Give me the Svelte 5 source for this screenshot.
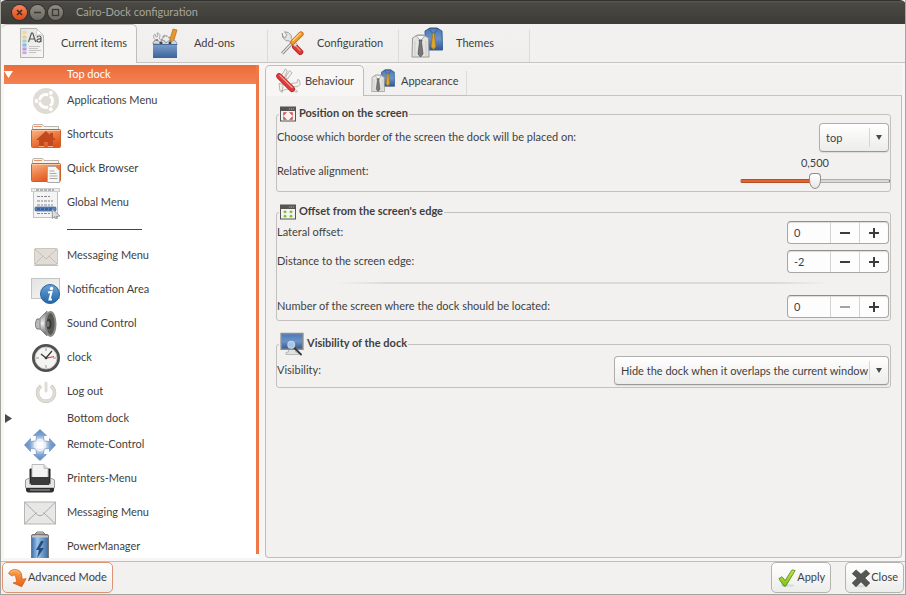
<script>
  const mainTabs = [
    { label: 'Current items', icon: 'palette', size: 32 },
    { label: 'Add-ons', icon: 'toolbox', size: 32 },
    { label: 'Configuration', icon: 'tools', size: 24 },
    { label: 'Themes', icon: 'shirts', size: 32 },
  ];
  const pageTabs = [
    { label: 'Behaviour', icon: 'knife', size: 26 },
    { label: 'Appearance', icon: 'shirts', size: 24 },
  ];
  const items = [
    { label: 'Top dock', kind: 'dock', open: true },
    { label: 'Applications Menu', icon: 'ubuntu', child: true },
    { label: 'Shortcuts', icon: 'home', child: true },
    { label: 'Quick Browser', icon: 'folder', child: true },
    { label: 'Global Menu', icon: 'menu', child: true },
    { label: '', kind: 'rule' },
    { label: 'Messaging Menu', icon: 'mailSmall', child: true },
    { label: 'Notification Area', icon: 'info', child: true },
    { label: 'Sound Control', icon: 'sound', child: true },
    { label: 'clock', icon: 'clock', child: true },
    { label: 'Log out', icon: 'power', child: true },
    { label: 'Bottom dock', kind: 'dock', open: false },
    { label: 'Remote-Control', icon: 'arrows' },
    { label: 'Printers-Menu', icon: 'printer' },
    { label: 'Messaging Menu', icon: 'mail' },
    { label: 'PowerManager', icon: 'battery' },
  ];

  let mainTab = $state(0);
  let pageTab = $state(0);
  let selected = $state(0);
  let border = $state('top');
  let visibility = $state('Hide the dock when it overlaps the current window');
  let align = $state(0.5);
  let lateral = $state(0);
  let distance = $state(-2);
  let screen = $state(0);
  const alignText = $derived(Number(align).toFixed(3).replace('.', ','));
</script>

{#snippet icon(name, size)}
  <svg class="icon" width={size} height={size} viewBox="0 0 32 32" aria-hidden="true">
    {#if name === 'palette'}
      <path d="M4.500 1.500h16l7 7v22h-23z" fill="url(#paper)" stroke="#b5b5b2" />
      <path d="M20.500 1.500c1 3 0 5-1 7 3-1 5-1 8 0z" fill="#fff" stroke="#bbb" stroke-width=".7" />
      <rect x="6.500" y="4" width="4" height="4" fill="#f0d9a0" /><rect x="6.500" y="8" width="4" height="4" fill="#dccf95" />
      <rect x="6.500" y="12" width="4" height="4" fill="#9ad3cf" /><rect x="6.500" y="16" width="4" height="4" fill="#8fb4e6" />
      <rect x="6.500" y="20" width="4" height="4" fill="#b99be0" /><rect x="6.500" y="24" width="4" height="3" fill="#cba6e0" />
      <path d="M6 8h5M6 12h5M6 16h5M6 20h5M6 24h5" stroke="#fff" stroke-width=".7" />
      <path d="M12.500 15l3-9h1.200l3 9M13.500 12h5M25 15v-4.500c0-2-3.500-2-4 0M25 12c-5-.5-5 3-2.500 3 1.500 0 2.500-1 2.500-2" fill="none" stroke="#565656" stroke-width="1.200" />
      <path d="M13 19.500h11M13 21.500h9M13 23.500h12M13 25.500h7" stroke="#c4c4c2" />
    {:else if name === 'toolbox'}
      <path d="M7 13c-3-1-3-5-1-6l1 3 2-1-1-3c3 0 4 3 2 5l5 6M12 14l3-6 2 1-2 6" fill="#eee" stroke="#aaa" />
      <circle cx="17" cy="13" r="4" fill="#eee" stroke="#999" stroke-width="1.500" stroke-dasharray="2 1" />
      <path d="M21 12l3-10 4 1-3 10-3 3z" fill="#e8962e" stroke="#b36b14" stroke-width=".7" />
      <path d="M4 17c0-5 6-5 7-1 2-4 5-3 6 0 2-3 4-2 5-1 3-3 6-1 6 3z" fill="#d6d6d6" stroke="#8f8f8f" />
      <circle cx="12" cy="16" r="1.500" fill="#444" /><circle cx="21" cy="16" r="1.500" fill="#444" /><circle cx="8" cy="13" r="1" fill="#777" />
      <rect x="4" y="17" width="24" height="14" fill="url(#boxFill)" />
      <path d="M4 17.500h24" stroke="#456e9f" />
    {:else if name === 'tools'}
      <path d="M20 21l7 7" stroke="#b91a1d" stroke-width="8" stroke-linecap="round" />
      <path d="M20 21l7 7" stroke="#dd3b36" stroke-width="6" stroke-linecap="round" />
      <path d="M21 20l6 6" stroke="#f58a80" stroke-width="1.500" stroke-linecap="round" />
      <path d="M3 3l1 6 4 4 4 0 8 8 3-3-8-8 0-4-4-4-5-1 3 4-2 4-3-1z" fill="#e4e4e2" stroke="#888" />
      <path d="M3 30l13-14" stroke="#777" stroke-width="4" /><path d="M3 30l13-14" stroke="#e6e6e6" stroke-width="2" />
      <path d="M17 15L28 4" stroke="#c2690d" stroke-width="7" stroke-linecap="round" />
      <path d="M17 15L28 4" stroke="#f19a2c" stroke-width="5" stroke-linecap="round" />
      <path d="M17 13L27 3" stroke="#ffd08a" stroke-width="1.500" stroke-linecap="round" />
    {:else if name === 'shirts'}
      <path d="M14 4l5-3h7l5 3 .5 19h-17z" fill="url(#blueBox)" stroke="#355f97" />
      <path d="M18 1.500l4.500 6 4.500-6z" fill="#5b82b9" stroke="#36598a" stroke-width=".8" />
      <path d="M21 6.500h3l-.500 2 1.500 11-2.500 3-2.500-3 1.500-11z" fill="#e0a32c" stroke="#9b6f11" stroke-width=".7" />
      <path d="M1.500 11l5-3h6l5 3 .5 19h-17z" fill="#e3e3e1" stroke="#999" />
      <path d="M5 8.500L9.500 14 14 8.500z" fill="#f5f5f4" stroke="#999" stroke-width=".8" />
      <path d="M8 13h3l-.500 2L12 27l-2.500 3L7 27l1.500-12z" fill="#777" stroke="#4d4d4d" stroke-width=".7" />
      <path d="M4 14v15M15 14v15" stroke="#c2c2c0" stroke-width=".7" />
    {:else if name === 'knife'}
      <g fill="#f0f0ef" stroke="#a0a09e" stroke-width=".9">
        <path d="M8 9L13 1l2 3-4 9zM13 11l5-8 3 3-6 8z" />
        <path d="M5 19l1 9 3 2 1-10zM7 28l13-3" />
        <path d="M20 19l7-1 1-4 2 1 1 5-3 3-6 0zM22 24l6 5-2 1-7-5z" />
      </g>
      <path d="M5 10L21 26" stroke="#b5201f" stroke-width="7" stroke-linecap="round" />
      <path d="M5 10L21 26" stroke="#dd3a37" stroke-width="5.500" stroke-linecap="round" />
      <path d="M6 9L21 24" stroke="#f5a29c" stroke-width="1.500" stroke-linecap="round" />
    {:else if name === 'ubuntu'}
      <circle cx="16" cy="16" r="13" fill="#dfdbd5" />
      <circle cx="16" cy="16" r="6.500" fill="none" stroke="#fff" stroke-width="3" />
      <path d="M16 16L5 16M16 16l5.500-9.500M16 16l5.500 9.500" stroke="#dfdbd5" stroke-width="1.500" />
      <g fill="#fff" stroke="#dfdbd5"><circle cx="6.500" cy="16" r="2.500" /><circle cx="20.800" cy="7.800" r="2.500" /><circle cx="20.800" cy="24.200" r="2.500" /></g>
    {:else if name === 'home' || name === 'folder'}
      <path d="M2.500 12V7l1-1.500h9l1.500 2h14.500V12z" fill="#f7f5f2" stroke="#b9b4ae" />
      <path d="M4 7.500h8" stroke="#ef8f5e" />
      <rect x="1.500" y="10.500" width="29" height="18" rx="1" fill="url(#folderFill)" stroke="#c9622f" />
      <path d="M2 11.500h28" stroke="#ffc9a3" />
      {#if name === 'home'}
        <path d="M16 12L6 21h3v6h5v-4h4v4h5v-6h3l-3-3v-4h-3v2z" fill="#c2481d" />
        <path d="M9 27.500h5M18 27.500h5" stroke="#f9b28a" />
      {:else}
        <path d="M17.500 13.500h8l4 4v12h-12z" fill="#f6f6f5" stroke="#aaa" />
        <path d="M19.500 18h5M19.500 20.500h7M19.500 23h8M19.500 25.500h8" stroke="#aaa" />
      {/if}
    {:else if name === 'menu'}
      <rect x="3.500" y="2.500" width="24" height="28" fill="#f4f4f4" stroke="#c2c2c2" />
      <rect x="1.500" y="1.500" width="28" height="3" fill="#ececec" stroke="#cecece" />
      <path d="M6 3h18" stroke="#777" stroke-dasharray="3 1" />
      <path d="M7 9.500h14M7 14h16M7 18h16M7 26.500h13" stroke="#888" stroke-width="1.200" stroke-dasharray="3 1 2 1" />
      <rect x="5" y="20" width="21" height="4" rx="1" fill="#5b83bb" stroke="#365f99" stroke-width=".7" />
      <path d="M7 22h15" stroke="#233f6d" stroke-dasharray="3 1" />
      <path d="M22 22l8 7-4 .5 1.500 2-2 .5-1-2.500-2 2z" fill="#ddd" stroke="#888" stroke-width=".8" />
    {:else if name === 'mailSmall'}
      <rect x="4.500" y="8.500" width="23" height="16" rx="1" fill="#e1ddd6" stroke="#cbc6bd" />
      <path d="M5 9l11 10L27 9M5 24l8-8M27 24l-8-8" fill="none" stroke="#b6b1a8" stroke-dasharray="2 1" />
      <path d="M4 25.500h24" stroke="#c5c1ba" />
    {:else if name === 'info'}
      <rect x="1.500" y="4.500" width="28" height="20" fill="url(#paper)" stroke="#c4c4c4" />
      <circle cx="20" cy="20" r="9.500" fill="url(#infoFill)" stroke="#2d659c" />
      <circle cx="21.500" cy="14.500" r="1.700" fill="#fff" />
      <path d="M18 18.500l3.500-.5-2 7.500h2.500" fill="none" stroke="#fff" stroke-width="2" />
    {:else if name === 'sound'}
      <path d="M11 11H7c-2 3-2 8 0 10h4z" fill="#bbb" stroke="#777" />
      <path d="M10 10l7-7v25l-7-7z" fill="url(#metal)" stroke="#888" />
      <ellipse cx="20.500" cy="16" rx="5" ry="12" fill="#565652" stroke="#8a8a87" stroke-width="2" />
      <ellipse cx="19" cy="16" rx="2.500" ry="5" fill="#383836" /><ellipse cx="18" cy="16" rx="1.500" ry="3" fill="#777" />
    {:else if name === 'clock'}
      <circle cx="16" cy="16" r="12.500" fill="#f4f4f3" stroke="#505050" stroke-width="3" />
      <circle cx="16" cy="16" r="11" fill="none" stroke="#bdbdbb" stroke-width=".8" />
      <path d="M16 6v3M16 23v3M6 16h3M23 16h3" stroke="#999" />
      <path d="M16 16l-5-4M16 16l6-7" stroke="#333" stroke-width="1.200" /><path d="M15 16.500l9-2" stroke="#e33" stroke-width="1.200" />
      <circle cx="16" cy="16" r="1.300" fill="#333" />
    {:else if name === 'power'}
      <path d="M11 10a8.500 8.500 0 1 0 10 0" fill="none" stroke="#c8c3ba" stroke-width="3.500" />
      <path d="M11 10a8.500 8.500 0 1 0 10 0" fill="none" stroke="#dfdbd5" stroke-width="2.500" />
      <path d="M16 7v8" stroke="#dfdbd5" stroke-width="3" stroke-linecap="round" />
    {:else if name === 'arrows'}
      <g fill="url(#arrowFill)" stroke="#6b8fc0" stroke-width=".7">
        {#each [0, 90, 180, 270] as turn}
          <path transform="rotate({turn} 16 16)" d="M16 .5l6.500 6h-3L20 12h-8l.5-5.500h-3z" />
        {/each}
      </g>
      <circle cx="16" cy="16" r="6" fill="#fff" opacity=".7" />
    {:else if name === 'printer'}
      <path d="M6 6h20v15H6z" fill="#303030" stroke="#222" />
      <path d="M8 1.500h12l4 4V15H8z" fill="#f4f4f4" stroke="#bcbcbc" /><path d="M20 1.500v4h4" fill="#ddd" stroke="#bcbcbc" />
      <path d="M1.500 17l4-2v6h21v-6l4 2v8h-29z" fill="#e6e6e4" stroke="#999" />
      <path d="M7 14h18v8H7z" fill="#3b3b3b" /><path d="M2 25h28v3l-2 1.500H4L2 28z" fill="#2e2e2e" /><path d="M6 27h20" stroke="#aaa" />
    {:else if name === 'mail'}
      <rect x=".5" y="5" width="31" height="22" fill="#e7e7e6" stroke="#b5b5b3" />
      <path d="M1 5.500l12.500 12.500q2.500 1.500 5 0L31 5.500M1 26.500l11.500-11M31 26.500L19.500 15.500" fill="none" stroke="#a8a8a7" />
    {:else if name === 'battery'}
      <path d="M11 3l2-2h6l2 2z" fill="#ddd" stroke="#777" />
      <rect x="7.500" y="3.500" width="17" height="30" rx="1.500" fill="url(#batteryFill)" stroke="#777" />
      <path d="M8 5.500h16" stroke="#c5c5c5" stroke-width="2" />
      <path d="M17 10l-5 9h3l-2 8 7-10h-4l4-7z" fill="#234c84" />
    {:else if name === 'shrink' || name === 'spread'}
      <rect x="1" y="2" width="30" height="28" fill="#f3f3ef" stroke="#555" stroke-width="2" />
      <rect x="1" y="2" width="30" height="8" fill="#555" /><path d="M18 6h10" stroke="#e8a73c" stroke-width="2" stroke-dasharray="2.500 1.500" />
      {#if name === 'shrink'}
        <path d="M7 13h6l-6 6zM25 13h-6l6 6zM7 27v-6l6 6zM25 27v-6l-6 6z" fill="#d94a4e" stroke="#d94a4e" />
      {:else}
        <path d="M7 16l3-3 3 3-3 2zM19 16l3-3 3 3-3 2zM7 24l3-2 3 2-3 3zM19 24l3-2 3 2-3 3z" fill="#77b51f" stroke="#77b51f" />
      {/if}
    {:else if name === 'monitor'}
      <path d="M12 22h8l1 5h4v3H8v-3h3z" fill="#e1e1df" stroke="#aaa" />
      <rect x="1.500" y="2" width="29" height="21" fill="url(#blueBox)" stroke="#8c8c8a" stroke-width="2" />
      <path d="M18 20l10 10" stroke="#3a3a3a" stroke-width="2.500" stroke-linecap="round" />
      <circle cx="15" cy="17" r="4.500" fill="#a9c3e4" stroke="#c3d5ea" stroke-width="1.500" />
    {:else if name === 'advanced'}
      <path d="M1 9C3 1 17 0 21 8l2 10 6-1-7 13L8 24l6-2-2-9c-1-3-4-2-5 0z" fill="url(#orangeFill)" stroke="#c85213" stroke-linejoin="round" />
      <path d="M4 8c3-5 11-5 14 1" fill="none" stroke="#ffc282" stroke-width="1.500" />
    {:else if name === 'apply'}
      <ellipse cx="17" cy="28" rx="11" ry="2" fill="#dcdcda" />
      <path d="M3 17l5-3 5 6L24 3l5 1L14 29h-3z" fill="url(#greenFill)" stroke="#4d8a0c" stroke-width="1.300" stroke-linejoin="round" />
    {:else if name === 'close'}
      <ellipse cx="16" cy="29" rx="12" ry="2" fill="#dcdcda" />
      <path d="M8 3l8 7 8-7 6 6-8 7 8 8-6 6-8-8-8 8-6-6 8-8-8-7z" fill="#555753" stroke="#2e3436" stroke-linejoin="round" />
    {/if}
  </svg>
{/snippet}

{#snippet spin(id, value, set, atMin)}
  <div class="spin">
    <input {id} type="text" {value} onchange={(e) => set(Number(e.currentTarget.value))} />
    <button type="button" aria-label="Decrease" disabled={atMin} onclick={() => set(value - 1)}>
      <svg width="12" height="12" viewBox="0 0 12 12"><path d="M1 6h10" stroke="currentColor" stroke-width="2" /></svg>
    </button>
    <button type="button" aria-label="Increase" onclick={() => set(value + 1)}>
      <svg width="12" height="12" viewBox="0 0 12 12"><path d="M1 6h10M6 1v10" stroke="currentColor" stroke-width="2" /></svg>
    </button>
  </div>
{/snippet}

<svg class="defs" width="0" height="0" aria-hidden="true">
  <defs>
    <linearGradient id="paper" x2="1" y2="1"><stop stop-color="#e2e2e0" /><stop offset="1" stop-color="#f8f8f7" /></linearGradient>
    <linearGradient id="blueBox" x2="0" y2="1"><stop stop-color="#4a78b5" /><stop offset=".5" stop-color="#6b93c8" /><stop offset="1" stop-color="#31578d" /></linearGradient>
    <linearGradient id="boxFill" x2="0" y2="1"><stop stop-color="#7da0cc" /><stop offset="1" stop-color="#3a649b" /></linearGradient>
    <linearGradient id="folderFill" x2=".6" y2="1"><stop stop-color="#f9b98d" /><stop offset=".5" stop-color="#ee8049" /><stop offset="1" stop-color="#e0531b" /></linearGradient>
    <linearGradient id="infoFill" x2="0" y2="1"><stop stop-color="#6ba3d6" /><stop offset="1" stop-color="#2264a5" /></linearGradient>
    <linearGradient id="metal" x2="0" y2="1"><stop stop-color="#777" /><stop offset=".5" stop-color="#eee" /><stop offset="1" stop-color="#555" /></linearGradient>
    <linearGradient id="arrowFill" x2="0" y2="1"><stop stop-color="#6388bd" /><stop offset=".5" stop-color="#7fa3d3" /><stop offset="1" stop-color="#f0f5fb" /></linearGradient>
    <linearGradient id="batteryFill"><stop stop-color="#3f6da5" /><stop offset=".35" stop-color="#9cc3e8" /><stop offset="1" stop-color="#3b699f" /></linearGradient>
    <linearGradient id="orangeFill" x2="0" y2="1"><stop stop-color="#f9a550" /><stop offset="1" stop-color="#e85f14" /></linearGradient>
    <linearGradient id="greenFill" x2="0" y2="1"><stop stop-color="#c6e84a" /><stop offset="1" stop-color="#7fc01e" /></linearGradient>
  </defs>
</svg>

<div class="window">
  <header class="titlebar">
    <button class="wm wm-close" type="button" aria-label="Close window"><svg width="15" height="15" viewBox="0 0 15 15"><path d="M5 5l5 5M10 5l-5 5" stroke="#3b2a22" stroke-width="1.500" /></svg></button>
    <button class="wm" type="button" aria-label="Minimize"><svg width="15" height="15" viewBox="0 0 15 15"><path d="M4 7.500h7" stroke="#3a3935" stroke-width="1.500" /></svg></button>
    <button class="wm" type="button" aria-label="Maximize"><svg width="15" height="15" viewBox="0 0 15 15"><rect x="4.500" y="4.500" width="6" height="6" fill="none" stroke="#3a3935" stroke-width="1.300" /></svg></button>
    <span class="title">Cairo-Dock configuration</span>
  </header>

  <nav class="main-tabs" role="tablist">
    {#each mainTabs as tab, i}
      <button type="button" role="tab" aria-selected={mainTab === i} class:active={mainTab === i} onclick={() => (mainTab = i)}>
        {@render icon(tab.icon, tab.size)}<span>{tab.label}</span>
      </button>
    {/each}
    <div class="tab-fill"></div>
  </nav>

  <main>
    <aside>
      <ul>
        {#each items as item, i}
          <li>
            {#if item.kind === 'rule'}
              <div class="row short"><span class="line"></span></div>
            {:else}
              <button type="button" class="row" class:short={item.kind === 'dock'} class:selected={selected === i} onclick={() => (selected = i)}>
                <span class="lead" class:child={item.child}>
                  {#if item.kind === 'dock'}
                    <svg width="9" height="9" viewBox="0 0 9 9">
                      {#if item.open}<path d="M0 1h9L4.500 8z" fill="#fff" />{:else}<path d="M1 0l7 4.500L1 9z" fill="#4a4a4a" />{/if}
                    </svg>
                  {:else}
                    {@render icon(item.icon, 32)}
                  {/if}
                </span>
                <span class="name">{item.label}</span>
              </button>
            {/if}
          </li>
        {/each}
      </ul>
    </aside>

    <section class="notebook">
      <div class="page-tabs" role="tablist">
        {#each pageTabs as tab, i}
          <button type="button" role="tab" aria-selected={pageTab === i} class:active={pageTab === i} onclick={() => (pageTab = i)}>
            {@render icon(tab.icon, tab.size)}<span>{tab.label}</span>
          </button>
        {/each}
        <div class="tab-fill"></div>
      </div>

      <form class="page">
        <fieldset>
          <legend>{@render icon('shrink', 16)}<span class="name">Position on the screen</span></legend>
          <div class="field tall">
            <label for="border">Choose which border of the screen the dock will be placed on:</label>
            <div class="combo narrow">
              <select id="border" bind:value={border}><option>top</option><option>bottom</option><option>left</option><option>right</option></select>
              <span class="drop"></span>
            </div>
          </div>
          <div class="field range-field">
            <label for="align">Relative alignment:</label>
            <div class="scale">
              <output for="align">{alignText}</output>
              <input id="align" type="range" min="0" max="1" step="0.001" bind:value={align} style="--fill: {align * 100}%" />
            </div>
          </div>
        </fieldset>

        <fieldset>
          <legend>{@render icon('spread', 16)}<span class="name">Offset from the screen's edge</span></legend>
          <div class="field"><label for="lateral">Lateral offset:</label>{@render spin('lateral', lateral, (v) => (lateral = v), false)}</div>
          <div class="field gap"><label for="distance">Distance to the screen edge:</label>{@render spin('distance', distance, (v) => (distance = v), false)}</div>
          <hr />
          <div class="field last"><label for="screen">Number of the screen where the dock should be located:</label>{@render spin('screen', screen, (v) => (screen = v), screen <= 0)}</div>
        </fieldset>

        <fieldset>
          <legend>{@render icon('monitor', 24)}<span class="name">Visibility of the dock</span></legend>
          <div class="field tall last">
            <label for="visibility">Visibility:</label>
            <div class="combo">
              <select id="visibility" bind:value={visibility}><option>Hide the dock when it overlaps the current window</option><option>Always on top</option></select>
              <span class="drop"></span>
            </div>
          </div>
        </fieldset>
      </form>
    </section>
  </main>

  <footer>
    <button class="action advanced" type="button">{@render icon('advanced', 20)}<span class="name">Advanced Mode</span></button>
    <span class="spacer"></span>
    <button class="action" type="button">{@render icon('apply', 20)}<span class="name">Apply</span></button>
    <button class="action" type="button">{@render icon('close', 20)}<span class="name">Close</span></button>
  </footer>
</div>

<style>
  :global(body) { margin: 0; background: #f2f1f0; }
  .window, .window :is(button, input, select) { font-family: Lato, Roboto, sans-serif; font-size: 11px; color: #3f3f3f; }
  .window { box-sizing: border-box; height: 100vh; display: flex; flex-direction: column; background: #f2f1f0; border: solid #a5a39e; border-width: 0 1px 1px; line-height: 16px; overflow: hidden; }
  .window * { box-sizing: border-box; }
  .defs { position: absolute; }
  button { margin: 0; padding: 0; border: 0; background: none; line-height: 16px; }
  .icon { flex: none; display: block; overflow: hidden; }
  .name, label { padding-bottom: 2px; }

  .titlebar { flex: none; height: 24px; margin: 0 -1px; padding-left: 12px; display: flex; align-items: center; gap: 3px; border-top: 1px solid #33322e; border-radius: 6px 6px 0 0; background: linear-gradient(#5b5a54, #4a4944 2px, #3c3b37); }
  .wm { width: 15px; height: 15px; border-radius: 50%; display: grid; place-items: center; background: linear-gradient(#8f8c83, #6c6a62); box-shadow: 0 0 0 1px #34332f; }
  .wm-close { background: linear-gradient(#f5845c, #df4a16); }
  .title { margin-left: 10px; padding-bottom: 2px; color: #a9a59a; }

  .main-tabs { flex: none; display: flex; height: 39px; padding-left: 1px; }
  .main-tabs button { width: 131px; padding-left: 12px; display: flex; align-items: center; gap: 13px; background: linear-gradient(#f2f1f0, #efeeed); border: solid #c6c4c0; border-width: 0 0 1px; position: relative; }
  .main-tabs button:not(.active)::after, .page-tabs button:not(.active)::after { content: ""; position: absolute; right: 0; top: 6px; bottom: 0; width: 1px; background: #dddbd8; }
  .main-tabs button.active { width: 135px; padding-left: 14px; border-width: 1px 1px 0 0; border-color: #bfbdb9; border-radius: 5px 5px 0 0; background: #f7f6f5; padding-bottom: 2px; }
  .tab-fill { flex: 1; border-bottom: 1px solid #c6c4c0; }

  main { flex: 1; min-height: 0; display: flex; gap: 6px; padding: 2px 3px 3px; background: #f7f6f5; border-bottom: 1px solid #c0beba; }
  aside { flex: none; width: 255px; background: #fff; overflow: hidden; position: relative; }
  aside::after { content: ""; position: absolute; right: 0; top: 0; bottom: 4px; width: 3px; background: #f07746; }
  ul { list-style: none; margin: 0; padding: 0; }
  .row { width: 100%; height: 34px; display: flex; align-items: center; text-align: left; }
  .row.short { height: 19px; }
  .row.selected { background: linear-gradient(#ea6c3a, #f58152); color: #fff; }
  .lead { width: 63px; padding-left: 20px; flex: none; }
  .lead.child { padding-left: 26px; }
  .short .lead { padding-left: 0; }
  .lead svg { display: block; }
  .line { width: 75px; border-bottom: 1px solid #444; margin-left: 63px; }

  .notebook { flex: 1; min-width: 0; display: flex; flex-direction: column; }
  .page-tabs { flex: none; display: flex; height: 31px; }
  .page-tabs button { display: flex; align-items: center; gap: 6px; width: 103px; padding-left: 7px; border-bottom: 1px solid #c0beba; position: relative; background: #f2f1f0; padding-top: 2px; }
  .page-tabs button.active { width: 99px; gap: 4px; padding: 0 0 0 9px; border: solid #bfbdb9; border-width: 1px 1px 0; border-radius: 5px 5px 0 0; background: #f7f6f5; }
  .page-tabs .tab-fill { background: #f2f1f0; }
  .page { flex: 1; border: solid #bfbdb9; border-width: 0 1px 1px; border-radius: 0 0 4px 4px; background: #f2f1f0; padding: 9px 10px; display: flex; flex-direction: column; gap: 11px; }
  fieldset { margin: 0; padding: 0 1px 0 0; min-width: 0; border: 1px solid #c3c1bd; border-radius: 3px; }
  legend { margin-left: 2px; padding: 0 1px; display: flex; align-items: center; gap: 3px; min-height: 18px; font-weight: bold; }
  .field { display: flex; align-items: center; justify-content: space-between; height: 23px; }
  .field.tall { height: 29px; }
  .field.gap { margin-top: 6px; }
  .field.last { margin-bottom: 2px; }
  .range-field { height: 39px; margin-right: -1px; }
  hr { margin: 9px 60px 11px; height: 2px; border: 0; background: linear-gradient(90deg, #f2f1f0, #dddbd8 10%, #dddbd8 90%, #f2f1f0); }

  .combo { position: relative; height: 29px; }
  .combo select { appearance: none; height: 29px; width: 275px; padding: 0 20px 1px 6px; border: 1px solid #b1afab; border-bottom-color: #9b9995; border-radius: 4px; background: linear-gradient(#fff, #ececeb); box-shadow: 0 1px 1px #dddbd8; }
  .combo.narrow select { width: 70px; }
  .drop { position: absolute; right: 0; top: 5px; bottom: 5px; width: 20px; border-left: 1px solid #d8d6d3; pointer-events: none; display: grid; place-items: center; }
  .drop::after { content: ""; border: 3px solid transparent; border-top: 5px solid #4a4a4a; border-bottom: 0; margin-right: 2px; }

  .scale { width: 150px; display: flex; flex-direction: column; align-items: center; }
  .scale output { line-height: 18px; }
  .scale input { appearance: none; width: 100%; height: 18px; margin: 0; background: none; }
  .scale input::-webkit-slider-runnable-track { height: 4px; border-radius: 2px; border: 1px solid #00000033; background: linear-gradient(90deg, #e3632f var(--fill), #dbd9d6 var(--fill)); }
  .scale input::-webkit-slider-thumb { appearance: none; width: 12px; height: 16px; margin-top: -7px; border: 1px solid #8f8d89; border-radius: 4px 4px 6px 6px / 4px 4px 9px 9px; background: linear-gradient(#fff, #e8e7e5); }

  .spin { display: flex; width: 102px; height: 23px; border: 1px solid #a9a7a3; border-top-color: #8f8d89; border-radius: 4px; background: #fdfdfd; box-shadow: inset 0 1px 1px #dddcda; overflow: hidden; }
  .spin input { flex: 1; min-width: 0; border: 0; padding: 0 6px 1px; background: none; }
  .spin button { width: 29px; border-left: 1px solid #d5d3d0; display: grid; place-items: center; color: #3c3c3c; }
  .spin button:disabled { color: #a5a3a0; }

  footer { flex: none; height: 32px; padding: 0 1px 1px; display: flex; align-items: center; gap: 14px; }
  .spacer { flex: 1; }
  .action { height: 31px; padding: 0 5px; display: flex; align-items: center; border: 1px solid #b5b3af; border-radius: 5px; background: linear-gradient(#fff, #ececeb); }
  .advanced { border-color: #e09374; }
</style>
